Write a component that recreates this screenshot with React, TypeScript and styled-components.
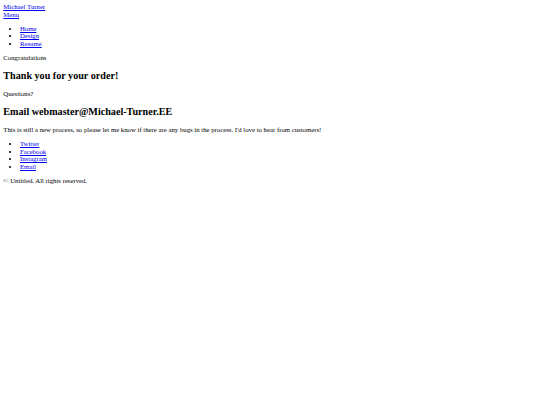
import React from "react";
import styled, { createGlobalStyle } from "styled-components";

const S = 540 / 1300;
const FONT = 16 * S * 1.017;

const Global = createGlobalStyle`
  html, body { background: #ffffff; }
  body {
    margin: ${8 * S}px;
    font-family: "Liberation Serif", "Times New Roman", serif;
    font-size: ${FONT}px;
    line-height: ${18 * S}px;
    color: #000000;
  }
`;

const Header = styled.header`
  display: block;
`;

const BlockLink = styled.a`
  display: block;
  width: max-content;
  color: #0000ee;
  text-decoration: underline;
`;

const LinkList = styled.ul`
  margin: ${16 * S}px 0;
  padding-left: ${40 * S}px;
  list-style: disc;
`;

const Item = styled.li`
  display: list-item;
`;

const Link = styled.a`
  color: #0000ee;
  text-decoration: underline;
`;

const Text = styled.p`
  margin: ${16 * S}px 0;
`;

const Heading = styled.h2`
  font-size: ${FONT * 1.5}px;
  line-height: ${28.5 * S}px;
  font-weight: bold;
  margin: ${20.2 * S}px 0;
`;

const Footer = styled.footer`
  display: block;
`;

export default function App() {
  return (
    <>
      <Global />
      <Header>
        <BlockLink href="#">Michael Turner</BlockLink>
        <BlockLink href="#">Menu</BlockLink>
        <nav>
          <LinkList>
            <Item><Link href="#">Home</Link></Item>
            <Item><Link href="#">Design</Link></Item>
            <Item><Link href="#">Resume</Link></Item>
          </LinkList>
        </nav>
      </Header>
      <main>
        <Text>Congratulations</Text>
        <Heading>Thank you for your order!</Heading>
        <Text>Questions?</Text>
        <Heading>Email webmaster@Michael-Turner.EE</Heading>
        <Text>
          This is still a new process, so please let me know if there are any bugs in the process. I'd love to hear from customers!
        </Text>
      </main>
      <Footer>
        <LinkList>
          <Item><Link href="#">Twitter</Link></Item>
          <Item><Link href="#">Facebook</Link></Item>
          <Item><Link href="#">Instagram</Link></Item>
          <Item><Link href="#">Email</Link></Item>
        </LinkList>
        <Text>© Untitled. All rights reserved.</Text>
      </Footer>
    </>
  );
}
